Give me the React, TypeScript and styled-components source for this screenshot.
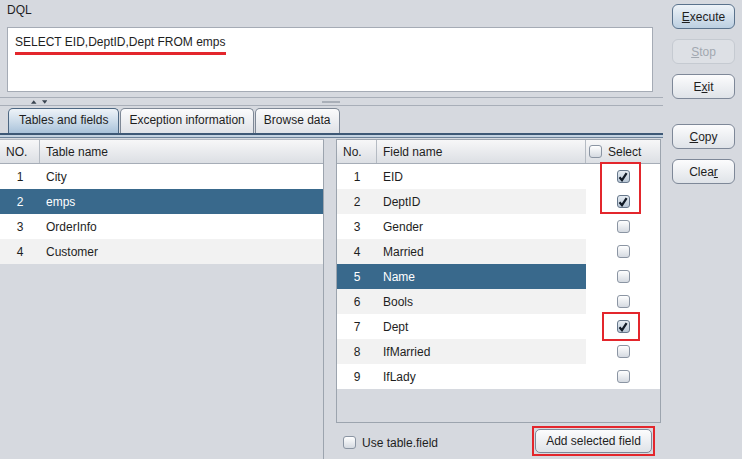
import React from "react";
import styled, { createGlobalStyle, css } from "styled-components";

const Global = createGlobalStyle`
  html, body { margin: 0; padding: 0; }
  body {
    width: 742px; height: 459px; overflow: hidden;
    background: #d6d9df;
    font-family: "Liberation Sans", Arial, sans-serif;
    font-size: 12px; color: #1e1e1e;
  }
  * { box-sizing: border-box; }
`;

const Window = styled.div`
  display: grid;
  grid-template-columns: 665px 1fr;
  width: 742px; height: 459px;
  background: #d6d9df;
`;

const Main = styled.div`
  display: flex; flex-direction: column; min-height: 0;
`;

const Label = styled.div`
  height: 27px; padding: 3px 7px 0; line-height: 15px;
`;

const Editor = styled.div`
  margin-left: 7px; width: 646px; height: 65px;
  background: #fff; border: 1px solid #a5abb5;
  padding: 7px 7px 0;
  line-height: 15px;
`;

const Query = styled.span`
  display: inline-block;
  padding-bottom: 2px;
  border-bottom: 3px solid #e3262c;
`;

const Divider = styled.div`
  height: 16px; padding-top: 5px;
`;

const DividerInner = styled.div`
  height: 9px; border-top: 1px solid #a8aeb8; border-bottom: 1px solid #a8aeb8;
  display: flex; align-items: center;
  margin-right: 2px;
`;

const Arrows = styled.div`
  margin-left: 31px; display: flex; gap: 5px; width: 16px;
`;

const Grip = styled.div`
  margin-left: 275px; width: 18px; height: 2px; background: #a9afb8;
`;

const TabBar = styled.div`
  height: 25px; display: flex; gap: 1px; padding-left: 8px; align-items: flex-end;
`;

const Tab = styled.div<{ $active?: boolean }>`
  height: 25px; padding: 0 8px; line-height: 23px;
  border: 1px solid #7e8896; border-bottom: none;
  border-radius: 5px 5px 0 0;
  background: linear-gradient(#fbfbfc, #dfe2e7);
  white-space: nowrap;
  ${(p) => p.$active && css`
    padding: 0 10px;
    border-color: #4d6782;
    background: linear-gradient(#eef3f8 0%, #cddcea 50%, #a9c2da 100%);
  `}
`;

const TabRule = styled.div`
  height: 5px; margin-right: 2px;
  border-top: 2px solid #3d5876; border-bottom: 1px solid #6c8299;
  background: #c3d2e1;
`;

const Content = styled.div`
  flex: 1; display: grid; grid-template-columns: 324px 325px; column-gap: 12px;
  min-height: 0; padding-top: 1px;
`;

const LeftPane = styled.div`
  border-right: 1px solid #9ca4ae; border-top: 1px solid #b3b9c2;
`;

const HeaderRow = styled.div<{ $cols: string }>`
  display: grid; grid-template-columns: ${(p) => p.$cols};
  height: 24px;
  background: linear-gradient(#f7f7f8, #dcdfe4);
  border-bottom: 1px solid #a6adb7;
`;

const HeadCell = styled.div<{ $last?: boolean; $pad?: number }>`
  display: flex; align-items: center; gap: 6px;
  padding-left: ${(p) => p.$pad ?? 6}px;
  border-right: ${(p) => (p.$last ? "none" : "1px solid #b5bbc3")};
  white-space: nowrap;
`;

const Row = styled.div<{ $cols: string }>`
  display: grid; grid-template-columns: ${(p) => p.$cols};
  height: 25px; align-items: center;
`;

const Cell = styled.div<{ $alt?: boolean; $sel?: boolean; $center?: boolean }>`
  height: 100%; display: flex; align-items: center;
  justify-content: ${(p) => (p.$center ? "center" : "flex-start")};
  padding-left: ${(p) => (p.$center ? "0" : "6px")};
  background: ${(p) => (p.$sel ? "#39698c" : p.$alt ? "#f2f2f2" : "#ffffff")};
  color: ${(p) => (p.$sel ? "#ffffff" : "#1e1e1e")};
`;

const RightPane = styled.div`
  display: flex; flex-direction: column;
`;

const FieldBox = styled.div`
  position: relative;
  height: 284px; border: 1px solid #9ca4ae;
`;

const Mark = styled.div`
  position: absolute; border: 2px solid #e3262c; pointer-events: none;
`;

const Footer = styled.div`
  flex: 1; display: flex; align-items: flex-start; justify-content: space-between;
  padding: 0 6px 0 7px;
`;

const CheckLabel = styled.label`
  display: flex; align-items: center; gap: 6px; height: 13px; margin-top: 13px;
`;

const Box = styled.span<{ $on?: boolean }>`
  width: 13px; height: 13px; border-radius: 3px;
  border: 1px solid #8b95a3;
  background: linear-gradient(#ffffff, #d5dae1);
  display: inline-flex; align-items: center; justify-content: center;
  flex: none;
  ${(p) => p.$on && css`
    border-color: #66778b;
    background: linear-gradient(#e6ecf2, #b9c7d6);
  `}
`;

const Highlight = styled.div`
  border: 2px solid #e3262c; padding: 1px; margin-top: 3px;
`;

const Button = styled.button<{ $focus?: boolean }>`
  height: 25px; width: 63px; border-radius: 6px;
  font-family: inherit; font-size: 12px; color: #1e1e1e;
  border: 1px solid #7e8898;
  background: linear-gradient(#fcfcfd, #dfe3e8);
  padding: 0;
  ${(p) => p.$focus && css`
    border-color: #5a728c;
    background: linear-gradient(#eef3f8, #bccfe1);
  `}
  &:disabled { color: #a2a8b0; border-color: #c5cad1; background: #dde0e5; }
`;

const WideButton = styled(Button)`
  display: block;
  width: 117px; height: 24px; border-radius: 5px;
`;

const Side = styled.div`
  display: flex; flex-direction: column; padding: 4px 0 0 7px; gap: 10px;
`;

const Spacer = styled.div`height: 5px;`;

const U = styled.span`text-decoration: underline;`;

const Tri = ({ up }: { up?: boolean }) => (
  <svg width="6" height="4" viewBox="0 0 6 4">
    <path d={up ? "M0 4 L3 0 L6 4 Z" : "M0 0 L3 4 L6 0 Z"} fill="#3a4450" />
  </svg>
);

const Check = ({ on }: { on?: boolean }) => (
  <Box $on={on}>
    {on && (
      <svg width="10" height="10" viewBox="0 0 10 10">
        <path d="M1.5 5.2 L4 8.2 L8.6 1.2" stroke="#101a26" strokeWidth="2.2" fill="none" />
      </svg>
    )}
  </Box>
);

const tables = ["City", "emps", "OrderInfo", "Customer"];
const fields = ["EID", "DeptID", "Gender", "Married", "Name", "Bools", "Dept", "IfMarried", "IfLady"];
const checked = [0, 1, 6];

const LCOLS = "40px 1fr";
const RCOLS = "40px 209px 1fr";

export default function App() {
  return (
    <>
      <Global />
      <Window>
        <Main>
          <Label>DQL</Label>
          <Editor>
            <Query>SELECT EID,DeptID,Dept FROM emps</Query>
          </Editor>
          <Divider>
            <DividerInner>
              <Arrows>
                <Tri up />
                <Tri />
              </Arrows>
              <Grip />
            </DividerInner>
          </Divider>
          <TabBar>
            <Tab $active>Tables and fields</Tab>
            <Tab>Exception information</Tab>
            <Tab>Browse data</Tab>
          </TabBar>
          <TabRule />
          <Content>
            <LeftPane>
              <HeaderRow $cols={LCOLS}>
                <HeadCell>NO.</HeadCell>
                <HeadCell $last>Table name</HeadCell>
              </HeaderRow>
              {tables.map((t, i) => (
                <Row key={t} $cols={LCOLS}>
                  <Cell $center $alt={i % 2 === 1} $sel={i === 1}>{i + 1}</Cell>
                  <Cell $alt={i % 2 === 1} $sel={i === 1}>{t}</Cell>
                </Row>
              ))}
            </LeftPane>
            <RightPane>
              <FieldBox>
                <HeaderRow $cols={RCOLS}>
                  <HeadCell>No.</HeadCell>
                  <HeadCell>Field name</HeadCell>
                  <HeadCell $last $pad={3}>
                    <Check />
                    Select
                  </HeadCell>
                </HeaderRow>
                {fields.map((f, i) => (
                  <Row key={f} $cols={RCOLS}>
                    <Cell $center $alt={i % 2 === 1} $sel={i === 4}>{i + 1}</Cell>
                    <Cell $alt={i % 2 === 1} $sel={i === 4}>{f}</Cell>
                    <Cell $center>
                      <Check on={checked.includes(i)} />
                    </Cell>
                  </Row>
                ))}
                <Mark style={{ left: 263, top: 22, width: 41, height: 52 }} />
                <Mark style={{ left: 265, top: 172, width: 38, height: 29 }} />
              </FieldBox>
              <Footer>
                <CheckLabel>
                  <Check />
                  Use table.field
                </CheckLabel>
                <Highlight>
                  <WideButton>Add selected field</WideButton>
                </Highlight>
              </Footer>
            </RightPane>
          </Content>
        </Main>
        <Side>
          <Button $focus><U>E</U>xecute</Button>
          <Button disabled><U>S</U>top</Button>
          <Button>E<U>x</U>it</Button>
          <Spacer />
          <Button><U>C</U>opy</Button>
          <Button>Clea<U>r</U></Button>
        </Side>
      </Window>
    </>
  );
}
